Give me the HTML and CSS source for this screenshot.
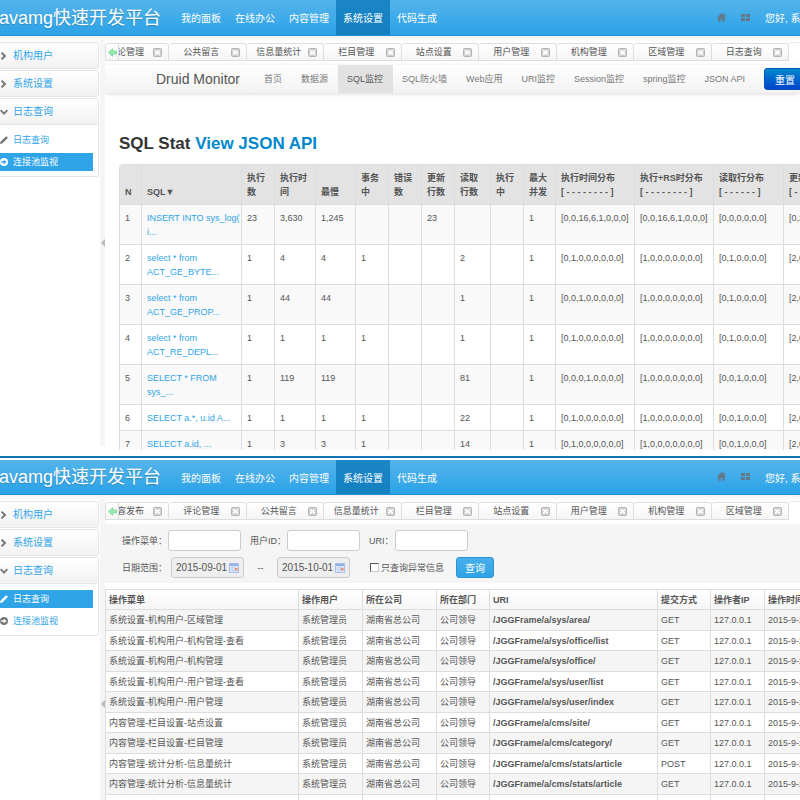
FILE: index.html
```html
<!DOCTYPE html>
<html lang="zh-CN">
<head>
    <meta charset="UTF-8">
    <meta name="viewport" content="width=device-width, initial-scale=1.0">
    <title>快速开发平台</title>
    <link rel="stylesheet" href="styles.css">
</head>
<body>
    <!-- shared icons -->
    <svg class="sprite" aria-hidden="true">
        <symbol id="i-home" viewBox="0 0 14 14"><path d="M7 0 0 7h2v6.500h3.800V9h2.400v4.500H12V7h2l-2-2V1.200h-2V3z"/></symbol>
        <symbol id="i-th" viewBox="0 0 9 9"><path d="M0 1h4v3H0zM5 1h4v3H5zM0 5h4v3H0zM5 5h4v3H5z"/></symbol>
        <symbol id="i-right" viewBox="0 0 10 10"><path d="M1 1.500 2.800 0 8 5 2.800 10 1 8.500 4.500 5z"/></symbol>
        <symbol id="i-down" viewBox="0 0 10 10"><path d="M0 3.500 1.500 2 5 5.200 8.500 2 10 3.500 5 8.600z"/></symbol>
        <symbol id="i-pencil" viewBox="0 0 10 10"><path d="M0 10 .6 7.200 7 .8q.8-.8 1.600 0l.6.600q.8.800 0 1.600L2.800 9.400z"/></symbol>
        <symbol id="i-go" viewBox="0 0 10 10"><path fill-rule="evenodd" d="M5 0a5 5 0 1 1 0 10A5 5 0 0 1 5 0zM1.500 4.200v1.600h3.200v1.900L8.300 5 4.700 2.300v1.900z"/></symbol>
        <symbol id="i-back" viewBox="0 0 9 9"><path d="M.5 4.500 4.500.8V3h4v3h-4v2.200z" fill="#9be8b0" stroke="#6fd592" stroke-width=".8"/></symbol>
        <symbol id="i-close" viewBox="0 0 9 9"><rect x=".5" y=".5" width="8" height="8" rx="1" fill="#d2d2d2" stroke="#b4b4b4"/><path d="M2.200 2.700 6.800 6.300M6.800 2.700 2.200 6.300" stroke="#fff" stroke-width="1.600"/></symbol>
        <symbol id="i-cal" viewBox="0 0 10 10"><rect x=".5" y=".5" width="9" height="9" fill="#e4edfb" stroke="#a9bfe6"/><path d="M1 1h8v2H1z" fill="#8fb0e8"/><path d="M3.300 3v6M5.600 3v6M1 5h8M1 7h8" stroke="#b4c6e8" stroke-width=".6"/><path d="M6 5h2.500v2.500H6z" fill="#e5907c"/></symbol>
    </svg>

    <section class="screen">
        <header class="topbar">
            <a class="brand" href="#">avamg快速开发平台</a>
            <nav class="menu">
                <a href="#">我的面板</a>
                <a href="#">在线办公</a>
                <a href="#">内容管理</a>
                <a href="#" class="active">系统设置</a>
                <a href="#">代码生成</a>
            </nav>
            <div class="user">
                <a href="#" aria-label="主页"><svg><use href="#i-home"/></svg></a>
                <a href="#" aria-label="页签"><svg><use href="#i-th"/></svg></a>
                <a href="#">您好, 系统管理员</a>
            </div>
        </header>

        <div class="content">
            <aside class="sidebar">
                <div class="group"><a class="heading" href="#"><svg><use href="#i-right"/></svg>机构用户</a></div>
                <div class="group"><a class="heading" href="#"><svg><use href="#i-right"/></svg>系统设置</a></div>
                <div class="group">
                    <a class="heading" href="#"><svg><use href="#i-down"/></svg>日志查询</a>
                    <ul>
                        <li><a href="#"><svg><use href="#i-pencil"/></svg>日志查询</a></li>
                        <li class="active"><a href="#"><svg><use href="#i-go"/></svg>连接池监视</a></li>
                    </ul>
                </div>
            </aside>
            <div class="splitter"><span class="handle"></span></div>

            <main class="main">
                <div class="tabs">
                    <div class="tab first"><button class="back" aria-label="向左"><svg><use href="#i-back"/></svg></button><span>评论管理</span><svg><use href="#i-close"/></svg></div>
                    <div class="tab"><span>公共留言</span><svg><use href="#i-close"/></svg></div>
                    <div class="tab"><span>信息量统计</span><svg><use href="#i-close"/></svg></div>
                    <div class="tab"><span>栏目管理</span><svg><use href="#i-close"/></svg></div>
                    <div class="tab"><span>站点设置</span><svg><use href="#i-close"/></svg></div>
                    <div class="tab"><span>用户管理</span><svg><use href="#i-close"/></svg></div>
                    <div class="tab"><span>机构管理</span><svg><use href="#i-close"/></svg></div>
                    <div class="tab"><span>区域管理</span><svg><use href="#i-close"/></svg></div>
                    <div class="tab"><span>日志查询</span><svg><use href="#i-close"/></svg></div>
                    <div class="tab current"></div>
                </div>

                <div class="druid-nav">
                    <a class="druid-brand" href="#">Druid Monitor</a>
                    <a href="#">首页</a>
                    <a href="#">数据源</a>
                    <a href="#" class="active">SQL监控</a>
                    <a href="#">SQL防火墙</a>
                    <a href="#">Web应用</a>
                    <a href="#">URI监控</a>
                    <a href="#">Session监控</a>
                    <a href="#">spring监控</a>
                    <a href="#">JSON API</a>
                    <button class="reset">重置</button>
                </div>

                <div class="stat">
                    <h2>SQL Stat <a href="#">View JSON API</a></h2>
                    <table class="sql-table">
                        <colgroup>
                            <col class="w22"><col class="w100"><col class="w33"><col class="w41"><col class="w40">
                            <col class="w33"><col class="w33"><col class="w33"><col class="w36"><col class="w33">
                            <col class="w32"><col class="w79"><col class="w79"><col class="w70"><col class="w79">
                        </colgroup>
                        <thead>
                            <tr>
                                <th>N</th><th>SQL▼</th><th>执行数</th><th>执行时间</th><th>最慢</th>
                                <th>事务中</th><th>错误数</th><th>更新行数</th><th>读取行数</th><th>执行中</th>
                                <th>最大并发</th><th>执行时间分布<br>[ - - - - - - - - ]</th><th>执行+RS时分布<br>[ - - - - - - - - ]</th><th>读取行分布<br>[ - - - - - - ]</th><th>更新行分布<br>[ - - - - - - ]</th>
                            </tr>
                        </thead>
                        <tbody>
                            <tr>
                                <td>1</td><td><a href="#">INSERT INTO sys_log(<br>i...</a></td><td>23</td><td>3,630</td><td>1,245</td>
                                <td></td><td></td><td>23</td><td></td><td></td>
                                <td>1</td><td>[0,0,16,6,1,0,0,0]</td><td>[0,0,16,6,1,0,0,0]</td><td>[0,0,0,0,0,0]</td><td>[0,23,0,0,0,0]</td>
                            </tr>
                            <tr>
                                <td>2</td><td><a href="#">select * from<br>ACT_GE_BYTE...</a></td><td>1</td><td>4</td><td>4</td>
                                <td>1</td><td></td><td></td><td>2</td><td></td>
                                <td>1</td><td>[0,1,0,0,0,0,0,0]</td><td>[1,0,0,0,0,0,0,0]</td><td>[0,1,0,0,0,0]</td><td>[2,0,0,0,0,0]</td>
                            </tr>
                            <tr>
                                <td>3</td><td><a href="#">select * from<br>ACT_GE_PROP...</a></td><td>1</td><td>44</td><td>44</td>
                                <td></td><td></td><td></td><td>1</td><td></td>
                                <td>1</td><td>[0,0,1,0,0,0,0,0]</td><td>[1,0,0,0,0,0,0,0]</td><td>[0,1,0,0,0,0]</td><td>[2,0,0,0,0,0]</td>
                            </tr>
                            <tr>
                                <td>4</td><td><a href="#">select * from<br>ACT_RE_DEPL...</a></td><td>1</td><td>1</td><td>1</td>
                                <td>1</td><td></td><td></td><td>1</td><td></td>
                                <td>1</td><td>[0,1,0,0,0,0,0,0]</td><td>[1,0,0,0,0,0,0,0]</td><td>[0,1,0,0,0,0]</td><td>[2,0,0,0,0,0]</td>
                            </tr>
                            <tr>
                                <td>5</td><td><a href="#">SELECT * FROM<br>sys_...</a></td><td>1</td><td>119</td><td>119</td>
                                <td></td><td></td><td></td><td>81</td><td></td>
                                <td>1</td><td>[0,0,0,1,0,0,0,0]</td><td>[1,0,0,0,0,0,0,0]</td><td>[0,0,1,0,0,0]</td><td>[2,0,0,0,0,0]</td>
                            </tr>
                            <tr>
                                <td>6</td><td><a href="#">SELECT a.*, u.id A...</a></td><td>1</td><td>1</td><td>1</td>
                                <td>1</td><td></td><td></td><td>22</td><td></td>
                                <td>1</td><td>[0,1,0,0,0,0,0,0]</td><td>[1,0,0,0,0,0,0,0]</td><td>[0,0,1,0,0,0]</td><td>[2,0,0,0,0,0]</td>
                            </tr>
                            <tr>
                                <td>7</td><td><a href="#">SELECT a.id, ...</a></td><td>1</td><td>3</td><td>3</td>
                                <td>1</td><td></td><td></td><td>14</td><td></td>
                                <td>1</td><td>[0,1,0,0,0,0,0,0]</td><td>[1,0,0,0,0,0,0,0]</td><td>[0,0,1,0,0,0]</td><td>[2,0,0,0,0,0]</td>
                            </tr>
                        </tbody>
                    </table>
                </div>
            </main>
        </div>
    </section>

    <section class="screen">
        <header class="topbar">
            <a class="brand" href="#">avamg快速开发平台</a>
            <nav class="menu">
                <a href="#">我的面板</a>
                <a href="#">在线办公</a>
                <a href="#">内容管理</a>
                <a href="#" class="active">系统设置</a>
                <a href="#">代码生成</a>
            </nav>
            <div class="user">
                <a href="#" aria-label="主页"><svg><use href="#i-home"/></svg></a>
                <a href="#" aria-label="页签"><svg><use href="#i-th"/></svg></a>
                <a href="#">您好, 系统管理员</a>
            </div>
        </header>

        <div class="content">
            <aside class="sidebar">
                <div class="group"><a class="heading" href="#"><svg><use href="#i-right"/></svg>机构用户</a></div>
                <div class="group"><a class="heading" href="#"><svg><use href="#i-right"/></svg>系统设置</a></div>
                <div class="group">
                    <a class="heading" href="#"><svg><use href="#i-down"/></svg>日志查询</a>
                    <ul>
                        <li class="active"><a href="#"><svg><use href="#i-pencil"/></svg>日志查询</a></li>
                        <li><a href="#"><svg><use href="#i-go"/></svg>连接池监视</a></li>
                    </ul>
                </div>
            </aside>
            <div class="splitter"><span class="handle"></span></div>

            <main class="main">
                <div class="tabs">
                    <div class="tab first"><button class="back" aria-label="向左"><svg><use href="#i-back"/></svg></button><span>内容发布</span><svg><use href="#i-close"/></svg></div>
                    <div class="tab"><span>评论管理</span><svg><use href="#i-close"/></svg></div>
                    <div class="tab"><span>公共留言</span><svg><use href="#i-close"/></svg></div>
                    <div class="tab"><span>信息量统计</span><svg><use href="#i-close"/></svg></div>
                    <div class="tab"><span>栏目管理</span><svg><use href="#i-close"/></svg></div>
                    <div class="tab"><span>站点设置</span><svg><use href="#i-close"/></svg></div>
                    <div class="tab"><span>用户管理</span><svg><use href="#i-close"/></svg></div>
                    <div class="tab"><span>机构管理</span><svg><use href="#i-close"/></svg></div>
                    <div class="tab"><span>区域管理</span><svg><use href="#i-close"/></svg></div>
                    <div class="tab current"></div>
                </div>

                <form class="search">
                    <div class="row">
                        <label for="title">操作菜单：</label>
                        <input type="text" id="title">
                        <label for="userId">用户ID：</label>
                        <input type="text" id="userId">
                        <label for="uri">URI：</label>
                        <input type="text" id="uri">
                    </div>
                    <div class="row dates">
                        <label for="beginDate">日期范围：</label>
                        <span class="date"><input type="text" id="beginDate" value="2015-09-01" readonly><svg><use href="#i-cal"/></svg></span>
                        <span class="dash">--</span>
                        <span class="date"><input type="text" id="endDate" aria-label="结束日期" value="2015-10-01" readonly><svg><use href="#i-cal"/></svg></span>
                        <label class="check" for="exception"><input type="checkbox" id="exception">只查询异常信息</label>
                        <button type="button" class="query">查询</button>
                    </div>
                </form>

                <table class="log-table">
                    <colgroup>
                        <col class="w193"><col class="w64"><col class="w74"><col class="w53">
                        <col class="w168"><col class="w53"><col class="w54"><col class="w100">
                    </colgroup>
                    <thead>
                        <tr><th>操作菜单</th><th>操作用户</th><th>所在公司</th><th>所在部门</th><th>URI</th><th>提交方式</th><th>操作者IP</th><th>操作时间</th></tr>
                    </thead>
                    <tbody>
                        <tr><td>系统设置-机构用户-区域管理</td><td>系统管理员</td><td>湖南省总公司</td><td>公司领导</td><td><strong>/JGGFrame/a/sys/area/</strong></td><td>GET</td><td>127.0.0.1</td><td>2015-9-29</td></tr>
                        <tr><td>系统设置-机构用户-机构管理-查看</td><td>系统管理员</td><td>湖南省总公司</td><td>公司领导</td><td><strong>/JGGFrame/a/sys/office/list</strong></td><td>GET</td><td>127.0.0.1</td><td>2015-9-29</td></tr>
                        <tr><td>系统设置-机构用户-机构管理</td><td>系统管理员</td><td>湖南省总公司</td><td>公司领导</td><td><strong>/JGGFrame/a/sys/office/</strong></td><td>GET</td><td>127.0.0.1</td><td>2015-9-29</td></tr>
                        <tr><td>系统设置-机构用户-用户管理-查看</td><td>系统管理员</td><td>湖南省总公司</td><td>公司领导</td><td><strong>/JGGFrame/a/sys/user/list</strong></td><td>GET</td><td>127.0.0.1</td><td>2015-9-29</td></tr>
                        <tr><td>系统设置-机构用户-用户管理</td><td>系统管理员</td><td>湖南省总公司</td><td>公司领导</td><td><strong>/JGGFrame/a/sys/user/index</strong></td><td>GET</td><td>127.0.0.1</td><td>2015-9-29</td></tr>
                        <tr><td>内容管理-栏目设置-站点设置</td><td>系统管理员</td><td>湖南省总公司</td><td>公司领导</td><td><strong>/JGGFrame/a/cms/site/</strong></td><td>GET</td><td>127.0.0.1</td><td>2015-9-29</td></tr>
                        <tr><td>内容管理-栏目设置-栏目管理</td><td>系统管理员</td><td>湖南省总公司</td><td>公司领导</td><td><strong>/JGGFrame/a/cms/category/</strong></td><td>GET</td><td>127.0.0.1</td><td>2015-9-29</td></tr>
                        <tr><td>内容管理-统计分析-信息量统计</td><td>系统管理员</td><td>湖南省总公司</td><td>公司领导</td><td><strong>/JGGFrame/a/cms/stats/article</strong></td><td>POST</td><td>127.0.0.1</td><td>2015-9-29</td></tr>
                        <tr><td>内容管理-统计分析-信息量统计</td><td>系统管理员</td><td>湖南省总公司</td><td>公司领导</td><td><strong>/JGGFrame/a/cms/stats/article</strong></td><td>GET</td><td>127.0.0.1</td><td>2015-9-29</td></tr>
                        <tr><td>内容管理-内容管理-公共留言-查看</td><td>系统管理员</td><td>湖南省总公司</td><td>公司领导</td><td></td><td></td><td></td><td></td></tr>
                    </tbody>
                </table>
            </main>
        </div>
    </section>
</body>
</html>
```

FILE: styles.css
```css
* {
    margin: 0;
    padding: 0;
    box-sizing: border-box;
}

body {
    display: grid;
    grid-template-rows: minmax(0, 57fr) minmax(0, 43fr);
    height: 100vh;
    overflow: hidden;
    background: #fff;
    color: #555;
    font-family: "Liberation Sans", "Noto Sans CJK SC", sans-serif;
    font-size: 9px;
    line-height: 14px;
}

a {
    color: #2fa4e7;
    text-decoration: none;
}

button,
input {
    font-family: inherit;
}

.sprite {
    position: absolute;
    width: 0;
    height: 0;
}

.screen {
    display: flex;
    flex-direction: column;
    min-width: 0;
    overflow: hidden;
}

.screen:first-of-type {
    padding-bottom: 6px;
}

.screen:last-of-type {
    border-top: 2px solid #1273b5;
    padding-top: 2px;
}

/* top bar */
.topbar {
    display: flex;
    flex: none;
    height: 36px;
    background: linear-gradient(#54b4eb, #2fa4e7 90%);
    border-bottom: 1px solid #1f8fd2;
    overflow: hidden;
}

.screen:last-of-type .topbar {
    height: 35px;
}

.brand {
    display: flex;
    justify-content: flex-end;
    align-items: center;
    flex: none;
    width: 161px;
    color: #fff;
    font-size: 18px;
    white-space: nowrap;
    text-shadow: 0 1px 1px rgba(0, 0, 0, 0.2);
}

.menu {
    display: flex;
    margin-left: 13px;
}

.menu a {
    display: flex;
    align-items: center;
    padding: 3px 7px 0;
    color: #fff;
    font-size: 10px;
    white-space: nowrap;
}

.menu a.active {
    background: linear-gradient(#1a86c6, #1580bf);
}

.user {
    display: flex;
    flex: none;
    align-items: center;
    gap: 15px;
    width: 83px;
    margin-left: auto;
    white-space: nowrap;
}

.user a {
    color: #fff;
    font-size: 10px;
    padding-top: 3px;
}

.user svg {
    display: block;
    width: 9px;
    height: 9px;
    margin-bottom: 4px;
    fill: #63798a;
}

/* sidebar */
.content {
    display: flex;
    flex: 1;
    min-height: 0;
    background: linear-gradient(#f2f2f2, #fff 6px);
}

.sidebar {
    flex: none;
    width: 99px;
    padding-top: 6px;
}

.group {
    margin-bottom: 1px;
    border: 1px solid #e5e5e5;
    border-left: 0;
    border-radius: 0 3px 3px 0;
    background: #fff;
}

.heading {
    display: flex;
    align-items: center;
    height: 25px;
    gap: 5px;
    border-radius: 0 3px 3px 0;
    background: linear-gradient(#fff, #f2f2f2);
    font-size: 10px;
}

.sidebar svg {
    width: 8px;
    height: 8px;
    fill: #777;
}

.group ul {
    padding: 6px 5px 5px 0;
    border-top: 1px solid #e5e5e5;
    list-style: none;
}

.group li + li {
    margin-top: 4px;
}

.group li a {
    display: flex;
    align-items: center;
    height: 18px;
    gap: 5px;
}

.group li.active a {
    background: #2fa4e7;
    color: #fff;
}

.group li.active svg {
    fill: #fff;
}

.splitter {
    display: flex;
    align-items: center;
    justify-content: flex-end;
    flex: none;
    width: 5px;
    margin: 4px 0 4px 1px;
    background: #f5f5f5;
}

.screen:last-of-type .splitter {
    margin-bottom: 0;
    padding-top: 108px;
}

.handle {
    border: 4px solid transparent;
    border-left: 0;
    border-right-color: #bbb;
}

/* tabs */
.main {
    flex: 1;
    min-width: 0;
    padding-top: 6px;
    overflow: hidden;
}

.tabs {
    display: grid;
    grid-template-columns: 64px repeat(8, minmax(0, 1fr)) 11px;
    height: 19px;
}

.tab {
    display: flex;
    align-items: center;
    min-width: 0;
    margin-top: 1px;
    padding: 0 6px 0 3px;
    border: 1px solid #ddd;
    border-left-width: 0;
    border-radius: 3px 3px 0 0;
    background: linear-gradient(#fff, #f5f5f5);
    white-space: nowrap;
    overflow: hidden;
}

.tab span {
    flex: 1;
    text-align: center;
}

.tab svg {
    flex: none;
    width: 9px;
    height: 9px;
}

.tab.first {
    padding-left: 0;
    border-left-width: 1px;
}

.tab.first span {
    display: flex;
    justify-content: flex-end;
    flex: none;
    width: 25px;
    margin-right: auto;
    overflow: hidden;
}

.tab.current {
    margin-top: 0;
    border-color: #e5e5e5 transparent transparent;
    background: #fff;
}

.back {
    display: flex;
    align-items: center;
    justify-content: center;
    flex: none;
    width: 13px;
    height: 100%;
    border: 0;
    border-right: 1px solid #ddd;
    background: none;
}

/* druid monitor */
.druid-nav {
    display: flex;
    height: 28px;
    margin-top: 4px;
    background: linear-gradient(#fff, #f2f2f2);
    box-shadow: 0 1px 4px rgba(0, 0, 0, 0.15);
    white-space: nowrap;
}

.druid-nav a {
    display: flex;
    align-items: center;
    padding: 0 10px 0 9px;
    color: #777;
}

.druid-nav a.active {
    background: #e2e2e2;
    color: #555;
}

.druid-nav .druid-brand {
    padding: 0 15px 0 51px;
    color: #555;
    font-size: 14px;
}

.reset {
    align-self: center;
    flex: none;
    width: 42px;
    height: 22px;
    margin-left: 9px;
    border: 1px solid #0055bb;
    border-radius: 3px;
    background: linear-gradient(#0088cc, #0044cc);
    color: #fff;
    font-size: 10px;
}

.stat {
    padding: 37px 0 0 14px;
}

.stat h2 {
    margin-bottom: 6px;
    color: #333;
    font-size: 17px;
    line-height: 28px;
}

.stat h2 a {
    color: #0088cc;
}

table {
    width: 100%;
    table-layout: fixed;
    border-collapse: separate;
    border-spacing: 0;
}

th,
td {
    text-align: left;
}

.sql-table {
    min-width: 743px;
    border: 1px solid #ddd;
    border-left: 0;
    border-radius: 4px;
}

.sql-table th,
.sql-table td {
    height: 26px;
    padding: 6px 0 5px 5px;
    border-left: 1px solid #ddd;
    vertical-align: top;
}

.sql-table th {
    padding-right: 5px;
    background: #e3e3e3;
    vertical-align: bottom;
}

.sql-table th:first-child {
    border-radius: 4px 0 0 0;
}

.sql-table td {
    border-top: 1px solid #ddd;
    white-space: nowrap;
}

.sql-table tbody tr:nth-child(odd) td {
    background: #f9f9f9;
}

.w22 { width: 22px; }
.w32 { width: 32px; }
.w33 { width: 33px; }
.w36 { width: 36px; }
.w40 { width: 40px; }
.w41 { width: 41px; }
.w53 { width: 53px; }
.w54 { width: 54px; }
.w64 { width: 64px; }
.w70 { width: 70px; }
.w74 { width: 74px; }
.w79 { width: 79px; }
.w100 { width: 100px; }
.w168 { width: 168px; }
.w193 { width: 193px; }

/* log query */
.search {
    margin-top: 4px;
    padding: 6px 17px 5px;
    background: #f5f5f5;
}

.row {
    display: flex;
    align-items: center;
    height: 21px;
    white-space: nowrap;
}

.row + .row {
    margin-top: 6px;
}

.row label {
    margin-right: 1px;
}

.row input[type="text"] {
    width: 73px;
    height: 21px;
    margin-right: 9px;
    padding: 0 4px;
    border: 1px solid #ccc;
    border-radius: 3px;
    background: #fff;
    color: #555;
    font-size: 10px;
}

.dates label {
    margin-right: 4px;
}

.date {
    display: flex;
    align-items: center;
}

.row .date input[type="text"] {
    margin-right: 0;
    background: #eee;
}

.date svg {
    width: 10px;
    height: 10px;
    margin: 0 5px 0 -15px;
}

.dash {
    width: 33px;
    text-align: center;
}

.row .check {
    display: flex;
    align-items: center;
    gap: 2px;
    margin: 0 12px 0 20px;
}

.check input {
    appearance: none;
    width: 9px;
    height: 9px;
    border: 1px solid #ccc;
    border-top-color: #555;
    border-left-color: #555;
    background: #fff;
}

.query {
    width: 38px;
    height: 21px;
    border: 1px solid #2a95d4;
    border-radius: 3px;
    background: linear-gradient(#48afea, #2fa4e7);
    color: #fff;
    font-size: 10px;
}

.log-table {
    min-width: 759px;
    margin-top: 6px;
    border-top: 1px solid #ddd;
}

.log-table th,
.log-table td {
    padding: 3px 0 2px 3px;
    border-left: 1px solid #ddd;
    border-bottom: 1px solid #ddd;
    white-space: nowrap;
}

.log-table th {
    background: linear-gradient(#fff, #f5f5f5);
}

.log-table tbody tr:nth-child(odd) td {
    padding-bottom: 3px;
    background: #f5f5f5;
}
```
